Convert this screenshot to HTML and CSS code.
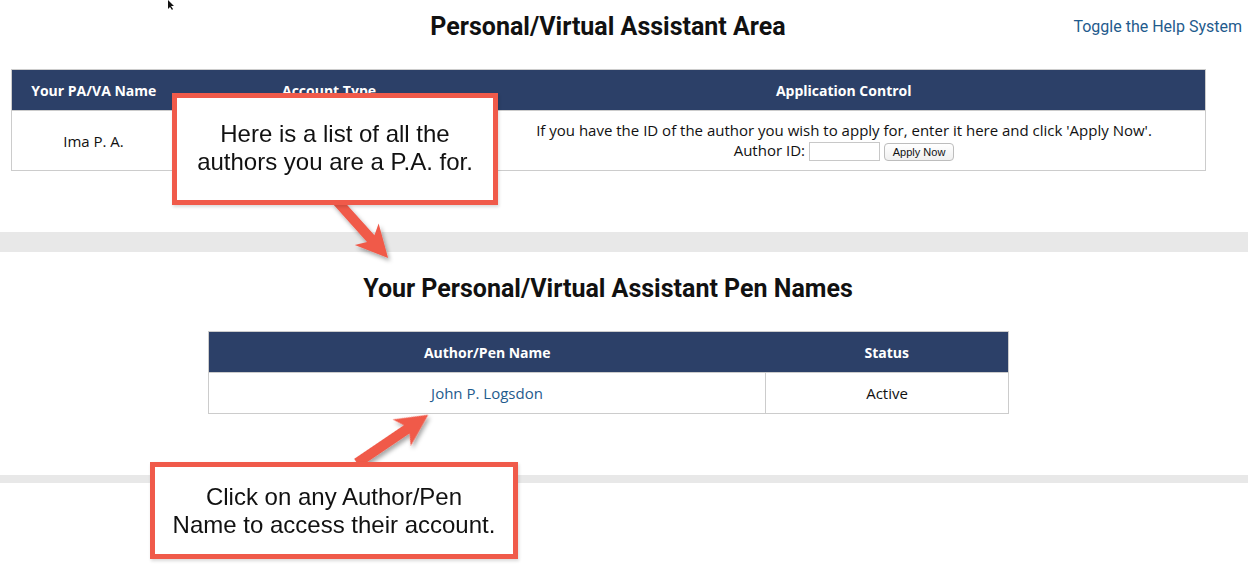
FILE: index.html
```html
<!DOCTYPE html>
<html>
<head>
<meta charset="utf-8">
<title>Personal/Virtual Assistant Area</title>
<link rel="stylesheet" href="styles.css">
</head>
<body>
<div class="page">
  <header class="top">
    <h1 class="title">Personal/Virtual Assistant Area</h1>
    <a class="toggle" href="#">Toggle the Help System</a>
  </header>

  <table class="grid grid-main">
    <colgroup>
      <col class="c1"><col class="c2"><col class="c3">
    </colgroup>
    <thead>
      <tr><th>Your PA/VA Name</th><th>Account Type</th><th>Application Control</th></tr>
    </thead>
    <tbody>
      <tr>
        <td>Ima P. A.</td>
        <td></td>
        <td class="apply">
          If you have the ID of the author you wish to apply for, enter it here and click 'Apply Now'.<br>
          Author ID: <input class="idbox" type="text"> <button class="applybtn">Apply Now</button>
        </td>
      </tr>
    </tbody>
  </table>

  <div class="band band-lg"></div>

  <h2 class="subtitle">Your Personal/Virtual Assistant Pen Names</h2>

  <table class="grid grid-pen">
    <colgroup>
      <col class="p1"><col class="p2">
    </colgroup>
    <thead>
      <tr><th>Author/Pen Name</th><th>Status</th></tr>
    </thead>
    <tbody>
      <tr><td><a class="penlink" href="#">John P. Logsdon</a></td><td>Active</td></tr>
    </tbody>
  </table>

  <div class="band band-sm"></div>

  <div class="overlay">
    <svg class="arrows" width="1248" height="579" viewBox="0 0 1248 579">
      <defs>
        <filter id="sh" x="-30%" y="-30%" width="160%" height="160%">
          <feDropShadow dx="2" dy="3" stdDeviation="2" flood-color="#000" flood-opacity="0.35"/>
        </filter>
      </defs>
      <g filter="url(#sh)" fill="#f05a4a">
        <g transform="translate(336,200) rotate(48.1)">
          <polygon points="78,0 46,-16 52,-5 0,-5 0,5 52,5 46,16"/>
        </g>
        <g transform="translate(357,463) rotate(-34.1)">
          <polygon points="86,0 54,-16 60,-5 0,-5 0,5 60,5 54,16"/>
        </g>
      </g>
      <polygon class="cursor" points="168,0 168,9 170,7 172,10 173,9 171,6 174,6" fill="#111"/>
    </svg>
    <div class="callout callout-1">Here is a list of all the<br>authors you are a P.A. for.</div>
    <div class="callout callout-2">Click on any Author/Pen<br>Name to access their account.</div>
  </div>
</div>
</body>
</html>
```

FILE: styles.css
```css
html, body {
  margin: 0;
  padding: 0;
  background: #fff;
}

body {
  font-family: "Open Sans", "Liberation Sans", sans-serif;
  font-size: 15px;
  color: #222;
}

.page {
  position: relative;
  width: 1248px;
  height: 579px;
  overflow: hidden;
}

.top {
  display: grid;
  grid-template-columns: 11px 1194px 1fr;
  height: 52px;
}

.title {
  grid-column: 2;
  grid-row: 1;
  margin: 0;
  text-align: center;
  font-family: Roboto, "Liberation Sans", sans-serif;
  font-weight: 700;
  font-size: 25px;
  line-height: 54px;
  color: #111;
}

.toggle {
  grid-column: 2 / 4;
  grid-row: 1;
  justify-self: end;
  margin-right: 6px;
  font-family: Roboto, "Liberation Sans", sans-serif;
  font-size: 16px;
  line-height: 54px;
  color: #1f5b8d;
  text-decoration: none;
}

.grid {
  border-collapse: collapse;
  table-layout: fixed;
  border: 1px solid #cccccc;
}

.grid th {
  background: #2c4068;
  color: #fff;
  font-weight: 700;
  font-size: 14px;
  height: 40px;
  padding: 0;
  text-align: center;
  border: none;
}

.grid td {
  text-align: center;
  padding: 0;
  border: 1px solid #cccccc;
  color: #111;
  font-size: 15px;
  line-height: 20px;
}

.grid-main {
  margin: 17px 0 0 11px;
  width: 1195px;
}

.grid-main .c1 { width: 164px; }
.grid-main .c2 { width: 307px; }
.grid-main td { height: 59px; }

.idbox {
  width: 65px;
  height: 15px;
  padding: 1px 2px;
  border: 1px solid #c8c8c8;
  vertical-align: middle;
  margin: 0;
}

.applybtn {
  font-family: "Liberation Sans", Arial, sans-serif;
  font-size: 11px;
  height: 18px;
  padding: 0 8px;
  border: 1px solid #bdbdbd;
  border-radius: 4px;
  background: linear-gradient(#ffffff, #f0f0f0);
  color: #111;
  vertical-align: middle;
  margin: 0;
}

.band {
  background: #e8e8e8;
  width: 100%;
}

.band-lg {
  height: 20px;
  margin-top: 61px;
}

.band-sm {
  height: 8px;
  margin-top: 61px;
}

.subtitle {
  margin: 22px 0 0 0;
  width: 1216px;
  text-align: center;
  font-family: Roboto, "Liberation Sans", sans-serif;
  font-weight: 700;
  font-size: 25px;
  line-height: 30px;
  color: #111;
}

.grid-pen {
  margin: 27px 0 0 208px;
  width: 801px;
}

.grid-pen .p1 { width: 557px; }
.grid-pen td { height: 40px; }

.penlink {
  color: #1f5b8d;
  text-decoration: none;
}

.overlay {
  position: absolute;
  inset: 0;
  pointer-events: none;
}

.arrows {
  position: absolute;
  left: 0;
  top: 0;
}

.callout {
  position: absolute;
  box-sizing: border-box;
  background: #fff;
  border: 5px solid #f05a4a;
  font-family: "Liberation Sans", Arial, sans-serif;
  font-size: 24px;
  line-height: 28px;
  color: #111;
  text-align: center;
  display: flex;
  align-items: center;
  justify-content: center;
  box-shadow: 1px 2px 3px rgba(0,0,0,0.15);
}

.callout-1 {
  left: 172px;
  top: 93px;
  width: 326px;
  height: 112px;
  padding-bottom: 2px;
}

.callout-2 {
  left: 150px;
  top: 462px;
  width: 368px;
  height: 97px;
}
```
